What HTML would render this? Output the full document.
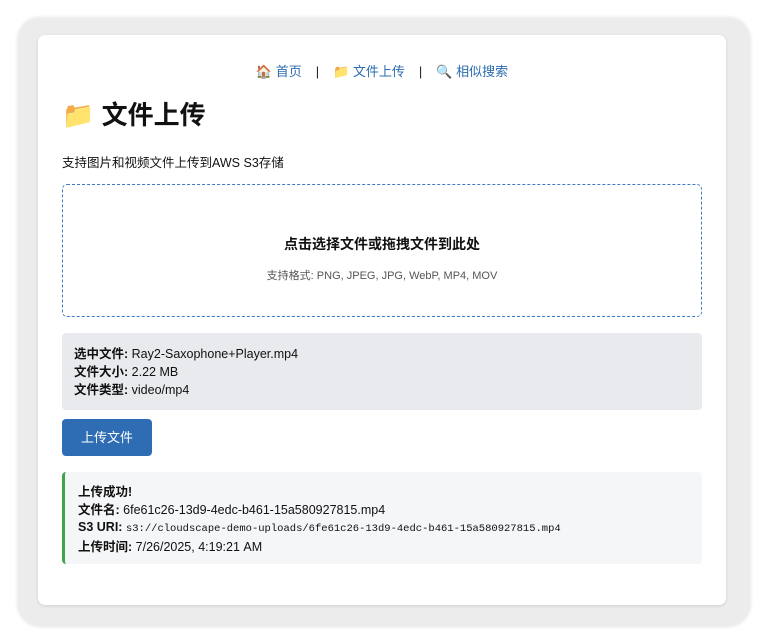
<!DOCTYPE html>
<html><head><meta charset="utf-8"><style>
*{margin:0;padding:0;box-sizing:border-box}
html,body{width:768px;height:644px;background:#fff;overflow:hidden;font-family:"Liberation Sans","Noto Sans CJK SC",sans-serif;color:#111}
.outer{position:absolute;left:18px;top:18px;width:732px;height:608px;background:#ececec;border-radius:22px;box-shadow:0 0 4px rgba(0,0,0,.15)}
.card{position:absolute;left:38px;top:35px;width:688px;height:570px;background:#fff;border-radius:7px;box-shadow:0 1px 3px rgba(0,0,0,.12)}
.nav{position:absolute;top:26px;left:0;width:100%;text-align:center;font-size:13px;color:#222}
.nav a{color:#2b6cb0;text-decoration:none}
.nav .sep{margin:0 14px}
h1{position:absolute;left:24px;top:63px;font-size:26px;font-weight:bold;line-height:34px}
.sub{position:absolute;left:24px;top:117px;font-size:12.5px}
.drop{position:absolute;left:24px;top:149px;width:640px;height:133px;border:1px dashed #3b7cc4;border-radius:5px;text-align:center}
.drop b{display:block;margin-top:49px;font-size:14px}
.drop span{display:block;margin-top:13px;font-size:11px;color:#555}
.info{position:absolute;left:24px;top:298px;width:640px;height:77px;background:#e8eaed;border-radius:4px;padding:12px 12px;font-size:12.5px;line-height:18px}
.btn{position:absolute;left:24px;top:384px;width:90px;height:37px;background:#2e6db4;color:#fff;border-radius:4px;font-size:13px;text-align:center;line-height:37px}
.ok{position:absolute;left:24px;top:437px;width:640px;height:92px;background:#f5f6f8;border-left:3px solid #3fa34d;border-radius:4px;padding:12px 13px;font-size:12.5px;line-height:17.5px}
.mono{font-family:"Liberation Mono",monospace;font-size:10.5px}
</style></head><body>
<div class="outer"></div>
<div class="card">
<div class="nav"><a>🏠 首页</a><span class="sep">|</span><a>📁 文件上传</a><span class="sep">|</span><a>🔍 相似搜索</a></div>
<h1>📁 文件上传</h1>
<div class="sub">支持图片和视频文件上传到AWS S3存储</div>
<div class="drop"><b>点击选择文件或拖拽文件到此处</b><span>支持格式: PNG, JPEG, JPG, WebP, MP4, MOV</span></div>
<div class="info"><b>选中文件:</b> Ray2-Saxophone+Player.mp4<br><b>文件大小:</b> 2.22 MB<br><b>文件类型:</b> video/mp4</div>
<div class="btn">上传文件</div>
<div class="ok"><b>上传成功!</b><br><b>文件名:</b> 6fe61c26-13d9-4edc-b461-15a580927815.mp4<br><b>S3 URI:</b> <span class="mono">s3://cloudscape-demo-uploads/6fe61c26-13d9-4edc-b461-15a580927815.mp4</span><br><b>上传时间:</b> 7/26/2025, 4:19:21 AM</div>
</div>
</body></html>
